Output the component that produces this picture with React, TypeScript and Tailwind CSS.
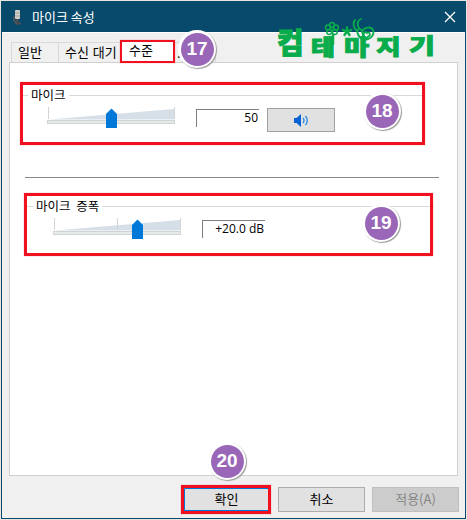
import React from "react";

const ui = "font-['Noto_Sans_CJK_KR',sans-serif]";

function Badge({ n, className }: { n: number; className: string }) {
  return (
    <div
      className={`absolute z-20 flex size-[38px] items-center justify-center rounded-full bg-white shadow-[1px_1px_1px_#999] ${className}`}
    >
      <div className="flex size-[33px] items-center justify-center rounded-full bg-[#9966b8] pb-px font-['Liberation_Sans',sans-serif] text-[19px] leading-none font-bold text-white">
        {n}
      </div>
    </div>
  );
}

function Mark({ className }: { className: string }) {
  return <div className={`pointer-events-none absolute z-10 border-[#f01020] shadow-[0_0_1px_#f0102080] ${className}`} />;
}

function Slider({ thumb, middle }: { thumb: number; middle?: boolean }) {
  return (
    <svg width="129" height="22" viewBox="0 0 129 22" className="shrink-0">
      <path d="M2 12.5 127 2V12.5Z" fill="#d6dfe7" />
      <path d={`M1.5 0V12M127.5 0V12${middle ? "M64.5 0V12" : ""}`} stroke="#d2d4d6" />
      <rect x=".5" y="13.5" width="127" height="3" fill="#e7eaea" stroke="#d0d4d5" />
      <path d={`M${thumb} 7l5.5-5.5L${thumb + 11} 7V21H${thumb}Z`} fill="#0078d7" />
    </svg>
  );
}

function Legend({ children }: { children: string }) {
  return (
    <div className="flex h-[18px] items-center">
      <span className="h-px w-[6px] bg-[#d9d9d9]" />
      <span className="px-[3px] pb-px text-[12.5px] leading-[17px] [word-spacing:3px] whitespace-pre">{children}</span>
      <span className="h-px flex-1 bg-[#d9d9d9]" />
    </div>
  );
}

function Value({ children }: { children: string }) {
  return (
    <div className="h-[18px] w-[63px] border-t border-l border-[#7f7f7f] pr-px text-right font-['Open_Sans',sans-serif] text-[12px] leading-[15px] whitespace-nowrap">
      {children}
    </div>
  );
}

function Logo() {
  return (
    <div
      role="img"
      className={`absolute top-[17px] left-[277px] z-20 h-[44px] w-[164px] font-black text-[#08ac4b] ${ui}`}
    >
      <div className="flex h-full items-start leading-none [-webkit-text-stroke:0.9px_#08ac4b] [stroke-linejoin:round]">
        <span className="mt-[8px] w-[34px] origin-top-left text-[29px] leading-[32px]">컴</span>
        <span className="mt-[16px] w-[33px] origin-top-left scale-x-[1.18] text-[22px] leading-[24px]">테</span>
        <span className="mt-[16px] w-[32px] origin-top-left scale-x-[1.24] text-[22px] leading-[24px]">마</span>
        <span className="mt-[16px] w-[33px] origin-top-left scale-x-[1.28] text-[21px] leading-[24px]">지</span>
        <span className="mt-[15px] w-[30px] origin-top-left scale-x-[1.34] text-[21px] leading-[24px]">기</span>
      </div>
      <svg className="absolute top-0 left-[44px]" width="58" height="28" viewBox="0 0 58 28" fill="none" stroke="#08ac4b" strokeWidth="1.8" strokeLinecap="round">
        <g strokeWidth="1.5">
          <circle cx="11" cy="12" r="1.7" />
          <circle cx="11" cy="8" r="2.4" />
          <circle cx="15" cy="10.5" r="2.4" />
          <circle cx="13.8" cy="15" r="2.4" />
          <circle cx="8.2" cy="15" r="2.4" />
          <circle cx="7" cy="10.5" r="2.4" />
        </g>
        <path d="M12 18v9" strokeWidth="2.4" />
        <path d="M26 10.5v3M21.8 13l3 1.2M30.2 13l-3 1.2M23.5 18l1.6-2.5M28.5 18l-1.6-2.5" strokeWidth="2.4" />
        <circle cx="26" cy="14.6" r="1.5" strokeWidth="1.2" />
        <path d="M42 23C36 19 35 13 38 12c3-1 4 4 4 8M42 23c7 0 12-5 10-10-2-4-9-3-11 2M43 19c-1-3 1-5 3-3 2-2 4 1 2 3l-4 3M35 13c-3-3-3-8-1-10M38 11c-3-4-1-8 2-9" />
        <path d="M42.5 23v4" strokeWidth="2.4" />
      </svg>
    </div>
  );
}

const button = "flex h-[25px] w-[87px] items-center justify-center pb-[3px] text-[13px] leading-none";

export default function App() {
  return (
    <div className={`relative h-[520px] w-[467px] overflow-hidden bg-[#e9e5df] pt-px pl-px text-black ${ui}`}>
      <div className="flex h-[518px] w-[465px] flex-col border border-[#074a6c] bg-[#f0f0f0]">
        <header className="flex h-[30px] shrink-0 items-center bg-[#074a6c] pr-[9px] pl-[11px] text-white">
          <svg width="8" height="15" viewBox="0 0 8 15" className="mr-[11px]">
            <path d="M1 6v5l3 1.5" fill="none" stroke="#5a5a5a" strokeWidth="1.5" />
            <rect x="2" y="0" width="5" height="9" rx="1" fill="#d2cfca" />
            <path d="M2 3h5M2 6h5" stroke="#a5a19c" />
            <path d="M4.5 9v3M2 13.5h6" stroke="#54504e" strokeWidth="2" />
          </svg>
          <span className="pb-px text-[13px] leading-none">마이크 속성</span>
          <svg className="ml-auto" width="12" height="12" viewBox="0 0 12 12">
            <path d="m1 1 10 10M11 1 1 11" stroke="white" strokeWidth="1.3" />
          </svg>
        </header>
        <nav className="flex h-[30px] shrink-0 items-end border-t border-white pl-[9px] text-[13px] leading-none">
          <div className="flex h-[20px] w-[47px] items-center border-t border-l border-[#d9d9d9] pb-[2px] pl-[6px]">일반</div>
          <div className="flex h-[20px] w-[64px] items-center border-t border-l border-[#d9d9d9] pb-[2px] pl-[6px] [word-spacing:1px] whitespace-nowrap">수신 대기</div>
          <div className="flex h-[22px] w-[51px] items-center bg-white pb-[3px] pl-[7px]">수준</div>
          <div className="flex h-[20px] w-[43px] items-center border-t border-r border-[#d9d9d9] pb-px pl-[4px]">...</div>
        </nav>
        <main className="mx-[7px] flex h-[414px] shrink-0 flex-col border border-[#d0d0d0] bg-white">
          <section className="mt-[23px] mr-[32px] ml-[12px]">
            <Legend>마이크</Legend>
            <div className="flex items-start pt-[3px] pl-[25px]">
              <Slider thumb={59} />
              <div className="ml-[20px] pt-[2px]"><Value>50</Value></div>
              <div className="mt-px ml-[8px] flex h-[24px] w-[68px] items-center justify-center border border-[#a0a0a0] bg-[#e1e1e1]">
                <svg width="15" height="13" viewBox="0 0 15 13">
                  <path d="M0 4h2.5L7 0v13L2.5 9H0Z" fill="#0862d6" />
                  <path d="M9 4q2 2.5 0 5M11.5 2q3.5 4.5 0 9" fill="none" stroke="#278be8" strokeWidth="1.3" />
                </svg>
              </div>
            </div>
          </section>
          <hr className="mt-[45px] mr-[18px] ml-[15px] border-[#888]" />
          <section className="mt-[19px] mr-[23px] ml-[17px]">
            <Legend>마이크 증폭</Legend>
            <div className="flex items-start pt-[3px] pl-[26px]">
              <Slider thumb={79} middle />
              <div className="ml-[20px] pt-[2px]"><Value>+20.0 dB</Value></div>
            </div>
          </section>
        </main>
        <footer className="flex justify-end gap-[7px] pt-[11px] pr-[6px]">
          <button className={`${button} mr-px border-2 border-[#0078d7] bg-[#e1e1e1]`}>확인</button>
          <button className={`${button} border border-[#adadad] bg-[#e1e1e1]`}>취소</button>
          <button className={`${button} border border-[#bfbfbf] bg-[#cccccc] text-[#858585]`} disabled>적용(A)</button>
        </footer>
      </div>
      <Logo />
      <Mark className="top-[40px] left-[120px] h-[23px] w-[55px] border-[2px]" />
      <Mark className="top-[82px] left-[20px] h-[63px] w-[405px] border-[3px]" />
      <Mark className="top-[193px] left-[24px] h-[63px] w-[409px] border-[3px]" />
      <Mark className="top-[485px] left-[181px] h-[29px] w-[90px] border-[3px]" />
      <Badge n={17} className="top-[30px] left-[178px]" />
      <Badge n={18} className="top-[92px] left-[363px]" />
      <Badge n={19} className="top-[204px] left-[362px]" />
      <Badge n={20} className="top-[442px] left-[208px]" />
    </div>
  );
}
